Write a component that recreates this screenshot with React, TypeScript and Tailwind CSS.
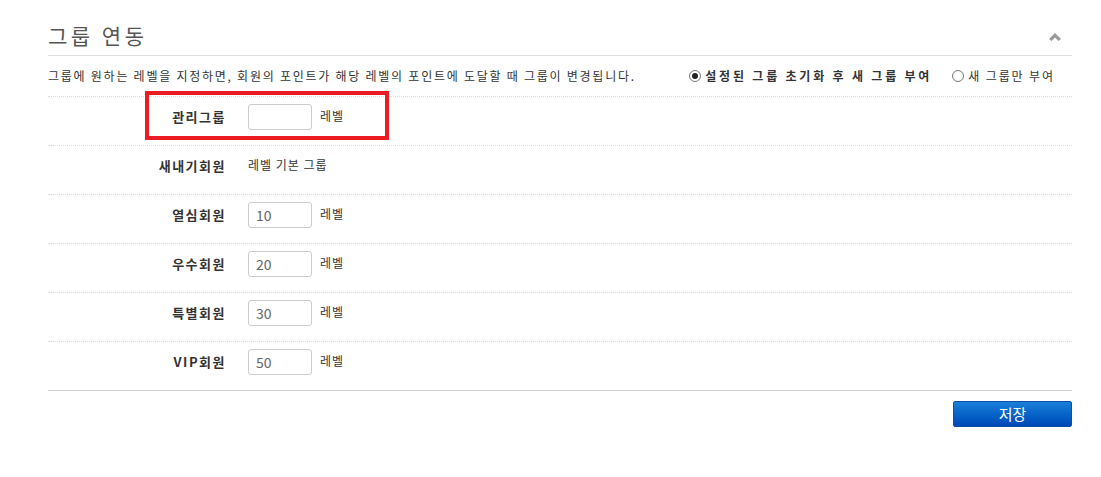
const font = { fontFamily: '"Noto Sans CJK KR", "Noto Sans", sans-serif' };

const groups = [
  { name: '새내기회원', value: null as string | null },
  { name: '열심회원', value: '10' },
  { name: '우수회원', value: '20' },
  { name: '특별회원', value: '30' },
  { name: 'VIP회원', value: '50' },
];

function Radio({ checked }: { checked: boolean }) {
  return (
    <span className="w-[12px] h-[12px] rounded-full border border-[#777] bg-white flex items-center justify-center shrink-0">
      {checked && <span className="w-[6px] h-[6px] rounded-full bg-[#222]" />}
    </span>
  );
}

function LevelInput({ value }: { value: string }) {
  return (
    <div className="w-[64px] h-[26px] rounded-[3px] border border-[#ccc] bg-white flex items-center px-[7px] text-[14px] text-[#666]">
      {value}
    </div>
  );
}

function Label({ children }: { children: string }) {
  return (
    <span className="w-[178px] h-[26px] flex items-center justify-end text-[13px] font-bold tracking-[1.5px]">
      {children}
    </span>
  );
}

export default function App() {
  return (
    <div className="w-[1101px] h-[477px] bg-white text-[#333]" style={font}>
      <div className="ml-12 w-[1024px]">
        <div className="h-[56px] pt-[16px] flex items-center justify-between border-b border-[#ddd]">
          <h2 className="text-[21px] text-[#555] tracking-[3.5px]">그룹 연동</h2>
          <svg width="12" height="8" viewBox="0 0 12 8" className="mr-[11px] mt-[2px]">
            <path d="M6 0 L12 6 L9.5 8 L6 4.5 L2.5 8 L0 6 Z" fill="#999" />
          </svg>
        </div>

        <div className="h-[41px] flex items-center justify-between border-b border-dotted border-[#ddd] text-[12px]">
          <p className="tracking-[1.75px]">그룹에 원하는 레벨을 지정하면, 회원의 포인트가 해당 레벨의 포인트에 도달할 때 그룹이 변경됩니다.</p>
          <div className="flex items-center mr-[17px]">
            <label className="flex items-center gap-[4px] font-bold tracking-[2.8px]">
              <Radio checked />
              설정된 그룹 초기화 후 새 그룹 부여
            </label>
            <label className="flex items-center gap-[4px] ml-[20px] tracking-[1.9px]">
              <Radio checked={false} />
              새 그룹만 부여
            </label>
          </div>
        </div>

        <div className="relative h-[49px] flex items-start pt-[7px] border-b border-dotted border-[#ddd]">
          <Label>관리그룹</Label>
          <div className="ml-[22px]">
            <LevelInput value="" />
          </div>
          <span className="ml-[8px] h-[26px] flex items-center text-[12px] tracking-[1px] -mt-[1px]">레벨</span>
          <div className="absolute left-[97px] -top-[6px] w-[244px] h-[49px] border-[4px] border-[#ec1c24]" />
        </div>

        {groups.map((g, i) => (
          <div
            key={g.name}
            className={
              i === groups.length - 1
                ? 'h-[49px] flex items-start pt-[7px] border-b border-[#ccc]'
                : 'h-[49px] flex items-start pt-[7px] border-b border-dotted border-[#ddd]'
            }
          >
            <Label>{g.name}</Label>
            {g.value === null ? (
              <span className="ml-[22px] h-[26px] flex items-center text-[12px] tracking-[1px] -mt-[1px]">레벨 기본 그룹</span>
            ) : (
              <>
                <div className="ml-[22px]">
                  <LevelInput value={g.value} />
                </div>
                <span className="ml-[8px] h-[26px] flex items-center text-[12px] tracking-[1px] -mt-[1px]">레벨</span>
              </>
            )}
          </div>
        ))}

        <div className="flex justify-end mt-[10px]">
          <button className="w-[119px] h-[26px] rounded-[2px] border border-[#0a4ea8] bg-gradient-to-b from-[#1a7fd8] to-[#0048b8] text-white text-[15px]">
            저장
          </button>
        </div>
      </div>
    </div>
  );
}
